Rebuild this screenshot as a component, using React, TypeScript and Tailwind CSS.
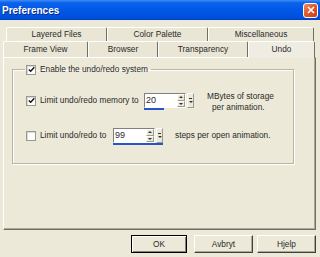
import type { ReactNode } from "react";

const rowOneTabs = [
  { label: "Layered Files", w: "w-[101px]" },
  { label: "Color Palette", w: "w-[101px]" },
  { label: "Miscellaneous", w: "w-[106px]" },
];

const rowTwoTabs = [
  { label: "Frame View", w: "w-[85px]", active: false },
  { label: "Browser", w: "w-[70px]", active: false },
  { label: "Transparency", w: "w-[90px]", active: false },
  { label: "Undo", w: "w-[67px]", active: true },
];

function Checkbox({ checked }: { checked: boolean }) {
  return (
    <div className="w-[10px] h-[10px] shrink-0 bg-white border border-[#9a998f] shadow-[inset_1px_1px_0_#dcdad0] flex items-center justify-center">
      {checked && (
        <svg width="7" height="7" viewBox="0 0 7 7">
          <path d="M0.8 3.4 L2.7 5.3 L6.3 1.2" fill="none" stroke="#111" strokeWidth="1.4" />
        </svg>
      )}
    </div>
  );
}

function Arrow({ up }: { up: boolean }) {
  return (
    <svg width="4" height="2" viewBox="0 0 4 2">
      <path d={up ? "M0 2 L2 0 L4 2 Z" : "M0 0 L2 2 L4 0 Z"} fill="#333" />
    </svg>
  );
}

function SpinBox({ value, bar }: { value: string; bar: string }) {
  return (
    <div className="flex flex-col w-[50px] shrink-0">
      <div className="flex h-[15px]">
        <div className="flex w-[43px] border border-t-[#808080] border-l-[#808080] border-b-white border-r-white bg-white">
          <div className="flex-1 pl-[1px] text-[9px] leading-[13px]">{value}</div>
          <div className="w-[8px] flex flex-col">
            <div className="flex-1 bg-[#ece9d8] border border-t-white border-l-white border-b-[#9a998f] border-r-[#9a998f] flex items-center justify-center">
              <Arrow up />
            </div>
            <div className="flex-1 bg-[#ece9d8] border border-t-white border-l-white border-b-[#9a998f] border-r-[#9a998f] flex items-center justify-center">
              <Arrow up={false} />
            </div>
          </div>
        </div>
        <div className="w-[7px] ml-px bg-[#ece9d8] border border-t-white border-l-white border-b-[#9a998f] border-r-[#9a998f] flex flex-col items-center justify-center gap-[2px]">
          <div className="w-[3px] h-px bg-[#333]" />
          <Arrow up={false} />
        </div>
      </div>
      <div className={`h-[2px] bg-[#2556c9] ${bar}`} />
    </div>
  );
}

function Button({ children, primary, w }: { children: ReactNode; primary?: boolean; w: string }) {
  return (
    <div
      className={`${w} h-[18px] flex items-center justify-center bg-[#ece9d8] ${
        primary
          ? "border border-black shadow-[inset_1px_1px_0_#fff,inset_-1px_-1px_0_#808080]"
          : "border border-t-white border-l-white border-b-[#404040] border-r-[#404040] shadow-[inset_-1px_-1px_0_#aca899]"
      }`}
    >
      {children}
    </div>
  );
}

export default function App() {
  return (
    <div className="w-[320px] h-[257px] overflow-hidden bg-[#ece9d8] text-[#2a2a2a] text-[8.3px] leading-[11px] font-['Liberation_Sans',Arial,sans-serif]">
      <div className="h-[20px] flex items-center justify-between bg-[linear-gradient(180deg,#3d8ff8_0%,#0b62ea_14%,#0057e6_55%,#004fdc_90%,#003fc0_100%)]">
        <span className="pl-[2px] text-[10px] font-bold text-white [text-shadow:1px_1px_0_#0b2a86]">
          Preferences
        </span>
        <div className="w-[15px] h-[15px] mr-[2px] rounded-[3px] border border-white bg-[linear-gradient(135deg,#f08a64,#e2542a_50%,#c9401c)] flex items-center justify-center">
          <svg width="8" height="8" viewBox="0 0 8 8">
            <path d="M1 1 L7 7 M7 1 L1 7" stroke="#fff" strokeWidth="1.6" />
          </svg>
        </div>
      </div>

      <div className="pt-[7px]">
        <div className="flex ml-[6px] h-[14px]">
          {rowOneTabs.map((t) => (
            <div
              key={t.label}
              className={`${t.w} flex items-center justify-center border-t border-l border-white border-r border-r-[#716f64] rounded-t-[2px] bg-[#e9e6d6]`}
            >
              {t.label}
            </div>
          ))}
        </div>
        <div className="flex ml-[3px] h-[16px]">
          {rowTwoTabs.map((t) => (
            <div
              key={t.label}
              className={`${t.w} flex items-center justify-center border-t border-l border-white border-r border-r-[#716f64] rounded-t-[2px] ${
                t.active ? "bg-[#efede2] relative z-10 h-[17px] pb-[2px]" : "bg-[#e9e6d6]"
              }`}
            >
              {t.label}
            </div>
          ))}
        </div>

        <div className="ml-[3px] w-[313px] h-[173px] border border-t-white border-l-white border-b-[#716f64] border-r-[#716f64] shadow-[inset_-1px_-1px_0_#aca899] pt-[6px] pl-[8px]">
          <fieldset className="w-[282px] border border-[#b8b5a6] shadow-[inset_1px_1px_0_#fff,1px_1px_0_#fff] pb-[18px]">
            <legend className="ml-[12px] px-[1px] h-[11px] flex items-center">
              <Checkbox checked />
              <span className="ml-[4px] pr-[2px]">Enable the undo/redo system</span>
            </legend>

            <div className="pl-[13px] pt-[18px] flex flex-col gap-[18px]">
              <div className="flex items-start h-[17px]">
                <div className="flex items-center h-[15px]">
                  <Checkbox checked />
                  <span className="ml-[4px] w-[104px]">Limit undo/redo memory to</span>
                </div>
                <SpinBox value="20" bar="w-[20px]" />
                <div className="ml-[13px] -mt-[2px]">
                  <div>MBytes of storage</div>
                  <div className="pl-[5px]">per animation.</div>
                </div>
              </div>

              <div className="flex items-start h-[17px]">
                <div className="flex items-center h-[15px]">
                  <Checkbox checked={false} />
                  <span className="ml-[4px] w-[73px]">Limit undo/redo to</span>
                </div>
                <SpinBox value="99" bar="w-full" />
                <div className="ml-[12px] h-[15px] flex items-center">steps per open animation.</div>
              </div>
            </div>
          </fieldset>
        </div>

        <div className="flex justify-end pr-[4px] mt-[5px]">
          <div className="mr-[7px]">
            <Button primary w="w-[56px]">OK</Button>
          </div>
          <div className="mr-[4px]">
            <Button w="w-[59px]">Avbryt</Button>
          </div>
          <Button w="w-[59px]">Hjelp</Button>
        </div>
      </div>
    </div>
  );
}
